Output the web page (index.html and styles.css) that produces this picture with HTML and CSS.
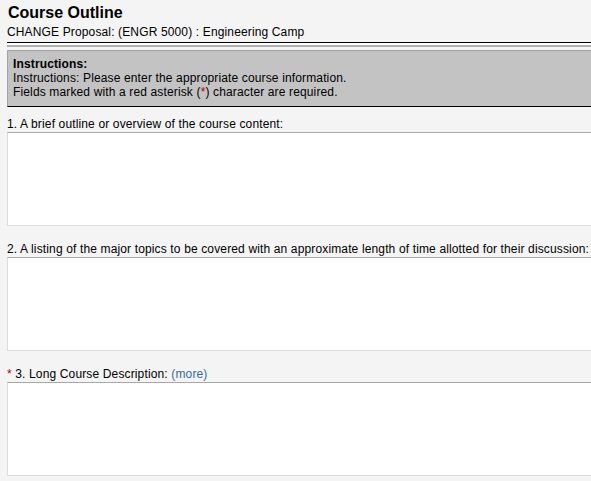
FILE: index.html
```html
<!DOCTYPE html>
<html>
<head>
<meta charset="utf-8">
<title>Course Outline</title>
<link rel="stylesheet" href="styles.css">
</head>
<body>
<div class="page">
  <div class="header">
    <h1 class="title">Course Outline</h1>
    <div class="subtitle">CHANGE Proposal: (ENGR 5000) : Engineering Camp</div>
  </div>
  <div class="rule"></div>
  <div class="instructions">
    <div class="instr-head">Instructions:</div>
    <div>Instructions: Please enter the appropriate course information.</div>
    <div>Fields marked with a red asterisk (<span class="req">*</span>) character are required.</div>
  </div>
  <div class="fields">
    <div class="field">
      <label class="label" for="f1">1. A brief outline or overview of the course content:</label>
      <textarea class="input" id="f1"></textarea>
    </div>
    <div class="field">
      <label class="label" for="f2">2. A listing of the major topics to be covered with an approximate length of time allotted for their discussion:</label>
      <textarea class="input" id="f2"></textarea>
    </div>
    <div class="field">
      <label class="label" for="f3"><span class="req">*</span> 3. Long Course Description: <a class="more" href="#">(more)</a></label>
      <textarea class="input" id="f3"></textarea>
    </div>
  </div>
</div>
</body>
</html>
```
FILE: styles.css
```css
html, body {
  margin: 0;
  padding: 0;
  overflow: hidden;
  background: #f4f4f4;
}
body {
  font-family: "Liberation Sans", Arial, sans-serif;
  font-size: 12px;
  letter-spacing: 0.14px;
  color: #000;
}
.page {
  width: 720px;
  padding-left: 7px;
}
.header {
  padding-top: 4px;
  padding-bottom: 3px;
  border-bottom: 1px solid #000;
}
.title {
  margin: 0;
  font-size: 16px;
  line-height: 18px;
  font-weight: bold;
  letter-spacing: 0;
  padding-left: 1px;
}
.subtitle {
  margin-top: 3px;
  line-height: 14px;
}
.rule {
  height: 2px;
  background: #afafaf;
  border-top: 2px solid #fff;
  margin-bottom: 3px;
}
.instructions {
  background: #c3c3c3;
  border-top: 1px solid #a3a3a3;
  border-left: 1px solid #a3a3a3;
  border-bottom: 1px solid #000;
  padding: 6px 0 7px 5px;
  line-height: 14px;
}
.instr-head {
  font-weight: bold;
}
.req {
  color: #b00000;
}
.fields {
  display: flex;
  flex-direction: column;
  gap: 16px;
  padding-top: 10px;
}
.field {
  display: flex;
  flex-direction: column;
}
.label {
  line-height: 15px;
  white-space: nowrap;
}
.more {
  color: #336c99;
  text-decoration: none;
}
.input {
  display: block;
  box-sizing: border-box;
  height: 94px;
  width: 700px;
  margin: 0;
  background: #fff;
  border: 1px solid #dcdcdc;
  border-top-color: #a8a8a8;
  resize: none;
  font: inherit;
}
```
